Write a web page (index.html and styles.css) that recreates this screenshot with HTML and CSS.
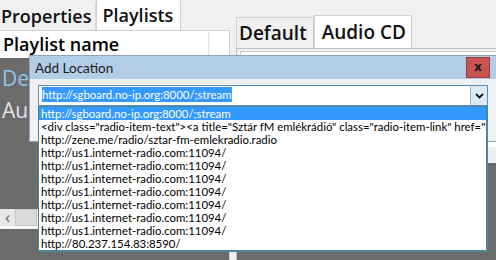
FILE: index.html
```html
<!DOCTYPE html>
<html lang="en">
<head>
    <meta charset="UTF-8">
    <title>Add Location</title>
    <link rel="stylesheet" href="styles.css">
</head>
<body>
    <div class="app">
        <!-- Left side: playlists -->
        <div class="side left">
            <div class="tabs">
                <div class="tab">Properties</div>
                <div class="tab active">Playlists</div>
            </div>
            <div class="pane">
                <div class="pane-head">
                    <span class="col-name">Playlist name</span>
                    <span class="col-rest"></span>
                </div>
                <div class="pane-body">
                    <div class="pl-item current">Default</div>
                    <div class="pl-item">Audio CD</div>
                    <div class="hscroll">
                        <span class="hs-btn">&lsaquo;</span>
                        <span class="hs-thumb"></span>
                    </div>
                </div>
            </div>
        </div>

        <!-- Right side: playlist view -->
        <div class="side right">
            <div class="tabs tabs-low">
                <div class="tab">Default</div>
                <div class="tab active">Audio CD</div>
            </div>
            <div class="view">
                <div class="view-inner"></div>
                <div class="view-dark">
                    <span class="view-scroll"></span>
                </div>
            </div>
        </div>
    </div>

    <!-- Dialog window -->
    <div class="dialog">
        <div class="dlg-title">
            <span>Add Location</span>
            <span class="dlg-close">x</span>
        </div>
        <div class="dlg-body">
            <div class="combo">
                <span class="combo-text"><span class="sel">http://sgboard.no-ip.org:8000/;stream</span></span>
                <span class="combo-btn">
                    <svg width="9" height="6" viewBox="0 0 9 6"><path d="M1 1 L4.5 4.5 L8 1" fill="none" stroke="#111" stroke-width="1.8"/></svg>
                </span>
            </div>
        </div>
    </div>

    <!-- Drop-down list of the combo -->
    <ul class="drop">
        <li class="hot">http://sgboard.no-ip.org:8000/;stream</li>
        <li>&lt;div class="radio-item-text"&gt;&lt;a title="Sztár fM emlékrádió" class="radio-item-link" href="http://zene.me/radio/sztar-fm-emlekradio.radio"&gt;</li>
        <li>http://zene.me/radio/sztar-fm-emlekradio.radio</li>
        <li>http://us1.internet-radio.com:11094/</li>
        <li>http://us1.internet-radio.com:11094/</li>
        <li>http://us1.internet-radio.com:11094/</li>
        <li>http://us1.internet-radio.com:11094/</li>
        <li>http://us1.internet-radio.com:11094/</li>
        <li>http://us1.internet-radio.com:11094/</li>
        <li>http://us1.internet-radio.com:11094/</li>
        <li>http://80.237.154.83:8590/</li>
    </ul>
</body>
</html>
```

FILE: styles.css
```css
body {
    margin: 0;
    width: 496px;
    height: 260px;
    overflow: hidden;
    position: relative;
    background-color: #f0f0f0;
    font-family: "Open Sans", "Noto Sans", sans-serif;
    color: #000;
}

/* App layout */
.app { display: flex; height: 260px; }
.side { display: flex; flex-direction: column; }
.left { width: 230px; }
.right { flex: 1; margin-left: 6px; }

.tabs { display: flex; align-items: flex-end; height: 30px; }
.tabs-low { height: 48px; }
.tab {
    font-size: 18px;
    font-weight: 600;
    line-height: 28px;
    padding: 0 4px 0 1px;
    color: #111;
    border-right: 1px solid #d9d9d9;
}
.tab.active {
    background-color: #fff;
    border: 1px solid #d0d0d0;
    border-bottom: none;
    padding: 1px 7px 1px 5px;
}
.tabs-low .tab { line-height: 30px; font-size: 19px; }
.tabs-low .tab:first-child { border: 1px solid #d0d0d0; border-bottom: none; background: #f0f0f0; padding: 0 6px 0 2px; }
.tabs-low .tab.active { line-height: 32px; padding: 0 5px 0 7px; }

/* Playlist pane */
.pane { flex: 1; display: flex; flex-direction: column; border-top: 1px solid #d0d0d0; border-right: 1px solid #d0d0d0; }
.pane-head { display: flex; height: 27px; background-color: #fff; }
.col-name {
    width: 209px;
    border-right: 1px solid #e2e2e2;
    font-size: 18px;
    font-weight: 600;
    line-height: 26px;
    padding-left: 3px;
    box-sizing: border-box;
}
.col-rest { flex: 1; }
.pane-body { flex: 1; background-color: #6b6b6b; display: flex; flex-direction: column; }
.pl-item { font-size: 21px; line-height: 32px; padding-left: 2px; color: #e4e4e4; }
.pl-item.current { color: #8ec6ee; margin-top: 4px; }

.hscroll {
    display: flex;
    height: 17px;
    margin-top: 83px;
    background-color: #e8e8e8;
    border-bottom: 3px solid #f7f7f7;
}
.hs-btn { width: 15px; text-align: center; font-size: 17px; line-height: 15px; color: #606060; }
.hs-thumb { width: 22px; background-color: #dadada; border: 1px solid #c8c8c8; box-sizing: border-box; }

/* Right view */
.view { flex: 1; display: flex; flex-direction: column; border-top: 1px solid #bdbdbd; border-left: 1px solid #bdbdbd; }
.view-inner { height: 95px; margin: 2px 0 0 3px; background: #fff; border-left: 1px solid #c8c8c8; border-top: 1px solid #c8c8c8; }
.view-dark { flex: 1; background-color: #6b6b6b; display: flex; justify-content: flex-end; }
.view-scroll { width: 8px; height: 16px; background: #eee; border-left: 1px solid #888; }

/* Dialog */
.dialog {
    position: absolute;
    left: 29px;
    top: 55px;
    width: 480px;
    height: 87px;
    background-color: #eef0f3;
    border: 1px solid #8ea4bd;
    box-sizing: border-box;
    font-family: Lato, "Open Sans", sans-serif;
    font-size: 12px;
}
.dlg-title {
    display: flex;
    justify-content: space-between;
    align-items: center;
    height: 23px;
    background-color: #b4cde7;
    padding-left: 5px;
    font-size: 13.5px;
    color: #1a1a1a;
}
.dlg-close {
    width: 24px;
    height: 21px;
    margin-right: 18px;
    background-color: #c75353;
    border: 1px solid #9a3a3a;
    box-sizing: border-box;
    text-align: center;
    font-family: "Open Sans", sans-serif;
    font-weight: bold;
    font-size: 13px;
    line-height: 17px;
}
.dlg-body { padding: 6px 0 0 8px; }
.combo {
    display: flex;
    width: 450px;
    height: 21px;
    background: #fff;
    border: 1px solid #5a8fb5;
    box-sizing: border-box;
}
.combo-text { flex: 1; padding: 1px 0 0 3px; line-height: 16px; font-size: 11.4px; }
.sel { background-color: #3399ff; color: #fff; padding: 1px 0; }
.combo-btn {
    width: 16px;
    background-color: #dce9f6;
    border-left: 1px solid #9ab8d6;
    display: flex;
    align-items: center;
    justify-content: center;
}

/* Drop-down list */
.drop {
    position: absolute;
    left: 38px;
    top: 106px;
    width: 450px;
    height: 146px;
    margin: 0;
    padding: 0;
    list-style: none;
    background-color: #fff;
    border: 1px solid #4b8796;
    border-width: 1px 2px 2px 1px;
    box-sizing: border-box;
    font-family: Lato, "Open Sans", sans-serif;
    font-size: 11.4px;
    line-height: 13px;
    overflow: hidden;
    white-space: nowrap;
}
.drop li { padding-left: 2px; }
.drop li.hot { background-color: #3399ff; color: #fff; }
```
